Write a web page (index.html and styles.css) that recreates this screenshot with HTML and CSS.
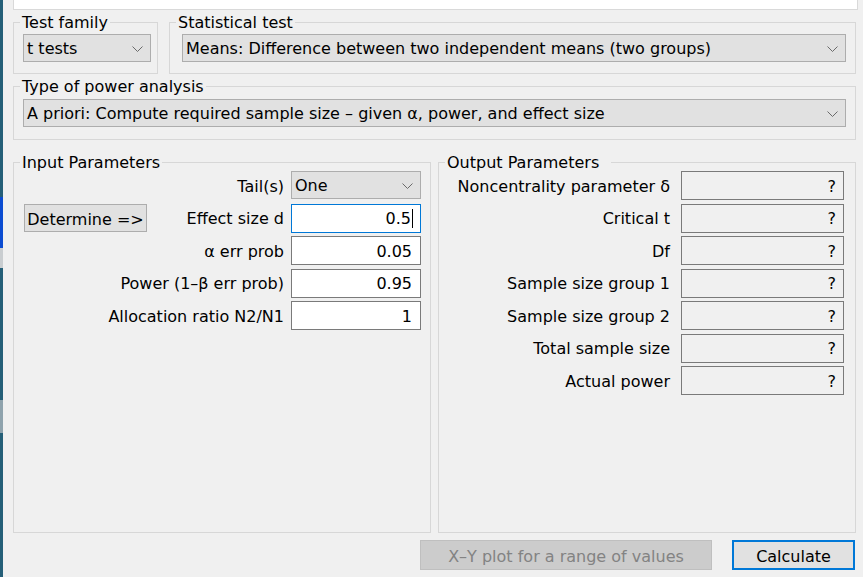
FILE: index.html
```html
<!DOCTYPE html>
<html lang="en">
<head>
<meta charset="utf-8">
<title>G*Power</title>
<link rel="stylesheet" href="styles.css">
</head>
<body>
<div class="screen">
  <div class="desk-strip">
    <div class="seg seg-teal seg-a"></div>
    <div class="seg seg-blue"></div>
    <div class="seg seg-grey"></div>
    <div class="seg seg-teal seg-b"></div>
    <div class="seg seg-grey2"></div>
    <div class="seg seg-teal seg-c"></div>
  </div>
  <div class="window">
    <div class="topbox"></div>
    <div class="row-top">
      <fieldset class="group g-family">
        <legend>Test family</legend>
        <div class="pad pad-top">
          <div class="combo">t tests<svg class="chev" width="11" height="6" viewBox="0 0 11 6"><polyline points="0.5,0.5 5.5,5.5 10.5,0.5" fill="none" stroke="#6a6a6a" stroke-width="1"/></svg></div>
        </div>
      </fieldset>
      <fieldset class="group g-stat">
        <legend>Statistical test</legend>
        <div class="pad pad-stat">
          <div class="combo">Means: Difference between two independent means (two groups)<svg class="chev" width="11" height="6" viewBox="0 0 11 6"><polyline points="0.5,0.5 5.5,5.5 10.5,0.5" fill="none" stroke="#6a6a6a" stroke-width="1"/></svg></div>
        </div>
      </fieldset>
    </div>
    <fieldset class="group g-type">
      <legend>Type of power analysis</legend>
      <div class="pad pad-type">
        <div class="combo">A priori: Compute required sample size – given α, power, and effect size<svg class="chev" width="11" height="6" viewBox="0 0 11 6"><polyline points="0.5,0.5 5.5,5.5 10.5,0.5" fill="none" stroke="#6a6a6a" stroke-width="1"/></svg></div>
      </div>
    </fieldset>
    <div class="params">
      <fieldset class="group g-param">
        <legend>Input Parameters</legend>
        <div class="grid-in">
          <div class="lbl lbl-wide r1">Tail(s)</div>
          <div class="combo combo-tail r1">One<svg class="chev" width="11" height="6" viewBox="0 0 11 6"><polyline points="0.5,0.5 5.5,5.5 10.5,0.5" fill="none" stroke="#6a6a6a" stroke-width="1"/></svg></div>
          <button class="btn btn-det">Determine =&gt;</button>
          <div class="lbl r2">Effect size d</div>
          <div class="field field-in field-focus r2">0.5<span class="caret"></span></div>
          <div class="lbl lbl-wide r3">α err prob</div>
          <div class="field field-in r3">0.05</div>
          <div class="lbl lbl-wide r4">Power (1–β err prob)</div>
          <div class="field field-in r4">0.95</div>
          <div class="lbl lbl-wide r5">Allocation ratio N2/N1</div>
          <div class="field field-in r5">1</div>
        </div>
      </fieldset>
      <fieldset class="group g-param">
        <legend class="legend-out">Output Parameters</legend>
        <div class="grid-out">
          <div class="lbl">Noncentrality parameter δ</div>
          <div class="field field-out">?</div>
          <div class="lbl">Critical t</div>
          <div class="field field-out">?</div>
          <div class="lbl">Df</div>
          <div class="field field-out">?</div>
          <div class="lbl">Sample size group 1</div>
          <div class="field field-out">?</div>
          <div class="lbl">Sample size group 2</div>
          <div class="field field-out">?</div>
          <div class="lbl">Total sample size</div>
          <div class="field field-out">?</div>
          <div class="lbl">Actual power</div>
          <div class="field field-out">?</div>
        </div>
      </fieldset>
    </div>
    <div class="actions">
      <button class="btn btn-plot">X–Y plot for a range of values</button>
      <button class="btn btn-calc">Calculate</button>
    </div>
  </div>
</div>
</body>
</html>
```
FILE: styles.css
```css
* { box-sizing: border-box; }
html, body {
  margin: 0;
  padding: 0;
  background: #f0f0f0;
}
body {
  font-family: "DejaVu Sans", "Liberation Sans", sans-serif;
  font-size: 16px;
  color: #000;
}
.screen {
  display: flex;
  width: 863px;
  height: 577px;
  overflow: hidden;
}
.desk-strip {
  width: 3px;
  display: flex;
  flex-direction: column;
}
.seg-teal { background: #255f78; }
.seg-a { height: 197px; }
.seg-blue { height: 51px; background: #0b4cd1; }
.seg-grey { height: 20px; background: #c9cdd0; }
.seg-b { height: 132px; }
.seg-grey2 { height: 33px; background: #8fa3ad; }
.seg-c { flex: 1; }

.window {
  flex: 1;
  padding: 0 7px 0 10px;
  display: flex;
  flex-direction: column;
}
.topbox {
  height: 10px;
  margin-right: -2px;
  background: #fff;
  border: 1px solid #d9d9d9;
  border-top: none;
}
.row-top {
  display: flex;
  gap: 11px;
  margin-top: 3px;
}
.group {
  margin: 0;
  padding: 0;
  border: 1px solid #d7d7d7;
  min-width: 0;
}
.group legend {
  margin-left: 6px;
  padding: 2px 2px 0 2px;
  line-height: 16px;
  white-space: nowrap;
}
.group .legend-out {
  padding: 2px 12px 0 2px;
}
.g-family { width: 145px; }
.g-stat { flex: 1; }
.pad-top { padding: 3px 6px 11px 9px; }
.pad-stat { padding: 3px 9px 11px 12px; }
.g-type { margin-top: 3px; }
.pad-type { padding: 4px 9px 12px 9px; }

.combo {
  height: 28px;
  background: #e1e1e1;
  border: 1px solid #adadad;
  display: flex;
  align-items: center;
  justify-content: space-between;
  padding: 1px 7px 0 3px;
  white-space: nowrap;
}
.chev { flex: none; margin-top: 0; }

.params {
  display: flex;
  gap: 7px;
  margin-top: 13px;
}
.g-param {
  width: 418px;
  height: 380px;
}
.grid-in {
  display: grid;
  grid-template-columns: 123px 1fr 130px;
  grid-template-rows: repeat(5, 29px);
  row-gap: 3.5px;
  column-gap: 7px;
  padding: 0 9px 0 10px;
}
.lbl {
  grid-column: 2;
  display: flex;
  align-items: center;
  justify-content: flex-end;
  white-space: nowrap;
  padding-top: 1px;
}
.grid-in .lbl-wide { grid-column: 1 / 3; }
.grid-in .r1 { grid-row: 1; }
.grid-in .r2 { grid-row: 2; }
.grid-in .r3 { grid-row: 3; }
.grid-in .r4 { grid-row: 4; }
.grid-in .r5 { grid-row: 5; }
.grid-in .combo, .grid-in .field { grid-column: 3; }
.combo-tail { align-self: start; }
.btn-det {
  grid-column: 1;
  grid-row: 2;
  align-self: center;
  width: 123px;
  height: 28px;
}
.field {
  height: 29px;
  border: 1px solid #7a7a7a;
  display: flex;
  align-items: center;
  justify-content: flex-end;
  padding: 1px 8px 0 0;
}
.field-in { background: #fff; }
.field-focus { border-color: #0078d7; padding-right: 7px; }
.caret {
  width: 1px;
  height: 19px;
  background: #000;
  margin-left: 1px;
}
.grid-out {
  display: grid;
  grid-template-columns: 1fr 163px;
  grid-auto-rows: 29px;
  row-gap: 3.5px;
  column-gap: 11px;
  padding: 0 11px 0 0;
}
.grid-out .lbl { grid-column: 1; }
.field-out {
  background: #f0f0f0;
  padding-right: 7px;
}

.btn {
  font-family: inherit;
  font-size: 16px;
  color: #000;
  background: #e1e1e1;
  border: 1px solid #adadad;
  padding: 2px 0 0 0;
  margin: 0;
  display: flex;
  align-items: center;
  justify-content: center;
}
.actions {
  display: flex;
  justify-content: flex-end;
  gap: 20px;
  margin-top: 7px;
  margin-right: 1px;
}
.btn-plot {
  width: 292px;
  height: 30px;
  background: #cccccc;
  border-color: #bfbfbf;
  color: #838383;
}
.btn-calc {
  width: 123px;
  height: 30px;
  border: 2px solid #0078d7;
}
```
